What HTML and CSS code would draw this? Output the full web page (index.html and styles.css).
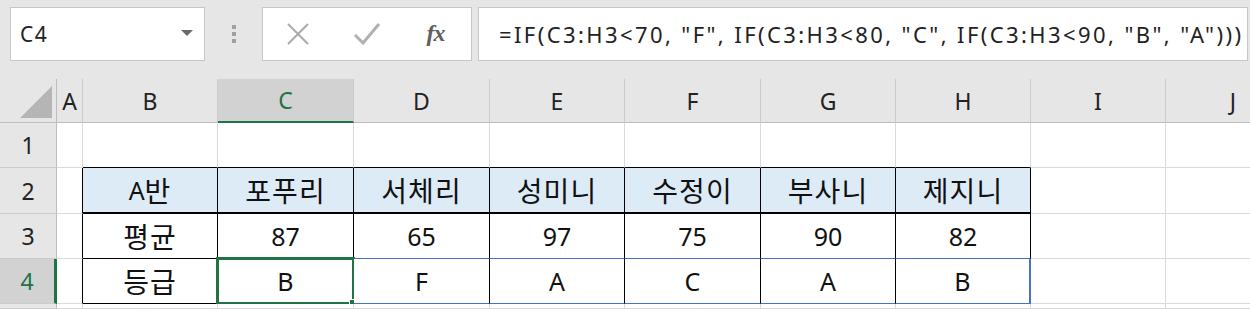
FILE: index.html
```html
<!DOCTYPE html>
<html lang="ko">
<head>
    <meta charset="UTF-8">
    <meta name="viewport" content="width=device-width, initial-scale=1.0">
    <title>Excel - IF</title>
    <link rel="stylesheet" href="styles.css">
</head>
<body>
    <div class="formula-bar">
        <div class="name-box">
            <span class="ref">C4</span>
            <span class="caret"></span>
        </div>
        <div class="grip">
            <i></i><i></i><i></i>
        </div>
        <div class="buttons">
            <span class="btn">
                <svg width="24" height="22" viewBox="0 0 24 22">
                    <path d="M2 1 L22 21 M22 1 L2 21" stroke="#ababab" stroke-width="2" fill="none"/>
                </svg>
            </span>
            <span class="btn">
                <svg width="28" height="24" viewBox="0 0 28 24">
                    <path d="M2 13 L10 21 L26 2" stroke="#b0b0b0" stroke-width="3" fill="none"/>
                </svg>
            </span>
            <span class="btn fx">fx</span>
        </div>
        <div class="formula">=IF(C3:H3&lt;70, "F", IF(C3:H3&lt;80, "C", IF(C3:H3&lt;90, "B", "A")))</div>
    </div>

    <div class="sheet">
        <!-- column headers -->
        <div class="cell corner">
            <svg width="32" height="32" viewBox="0 0 32 32"><path d="M32 0 L32 32 L0 32 Z" fill="#b5b5b5"/></svg>
        </div>
        <div class="cell hd">A</div>
        <div class="cell hd">B</div>
        <div class="cell hd on">C</div>
        <div class="cell hd">D</div>
        <div class="cell hd">E</div>
        <div class="cell hd">F</div>
        <div class="cell hd">G</div>
        <div class="cell hd">H</div>
        <div class="cell hd">I</div>
        <div class="cell hd">J</div>

        <!-- row 1 -->
        <div class="cell rh">1</div>
        <div class="cell"></div>
        <div class="cell edge-t"></div>
        <div class="cell edge-t"></div>
        <div class="cell edge-t"></div>
        <div class="cell edge-t"></div>
        <div class="cell edge-t"></div>
        <div class="cell edge-t"></div>
        <div class="cell edge-t"></div>
        <div class="cell"></div>
        <div class="cell"></div>

        <!-- row 2 -->
        <div class="cell rh">2</div>
        <div class="cell edge-l"></div>
        <div class="cell t head">A<span class="ko">반</span></div>
        <div class="cell t head"><span class="ko">포푸리</span></div>
        <div class="cell t head"><span class="ko">서체리</span></div>
        <div class="cell t head"><span class="ko">성미니</span></div>
        <div class="cell t head"><span class="ko">수정이</span></div>
        <div class="cell t head"><span class="ko">부사니</span></div>
        <div class="cell t head"><span class="ko">제지니</span></div>
        <div class="cell"></div>
        <div class="cell"></div>

        <!-- row 3 -->
        <div class="cell rh">3</div>
        <div class="cell edge-l"></div>
        <div class="cell t"><span class="ko">평균</span></div>
        <div class="cell t">87</div>
        <div class="cell t blue">65</div>
        <div class="cell t blue">97</div>
        <div class="cell t blue">75</div>
        <div class="cell t blue">90</div>
        <div class="cell t blue">82</div>
        <div class="cell"></div>
        <div class="cell"></div>

        <!-- row 4 -->
        <div class="cell rh on">4</div>
        <div class="cell edge-l"></div>
        <div class="cell t"><span class="ko">등급</span></div>
        <div class="cell t active">B<span class="sel"></span><span class="handle"></span></div>
        <div class="cell t blue">F</div>
        <div class="cell t blue">A</div>
        <div class="cell t blue">C</div>
        <div class="cell t blue">A</div>
        <div class="cell t blue blue-end">B</div>
        <div class="cell"></div>
        <div class="cell"></div>

        <!-- row 5 -->
        <div class="cell rh"></div>
        <div class="cell"></div>
        <div class="cell"></div>
        <div class="cell"></div>
        <div class="cell"></div>
        <div class="cell"></div>
        <div class="cell"></div>
        <div class="cell"></div>
        <div class="cell"></div>
        <div class="cell"></div>
        <div class="cell"></div>
    </div>
</body>
</html>
```

FILE: styles.css
```css
body {
    margin: 0;
    width: 1250px;
    height: 309px;
    overflow: hidden;
    background: #e6e6e6;
    font-family: "Noto Sans", "Noto Sans CJK KR", sans-serif;
    color: #222;
}

/* formula bar */
.formula-bar {
    height: 79px;
    box-sizing: border-box;
    padding: 7px 0 0 10px;
    display: flex;
    align-items: flex-start;
}
.name-box, .buttons, .formula {
    height: 54px;
    box-sizing: border-box;
    background: #fff;
    border: 1px solid #c6c6c6;
    display: flex;
    align-items: center;
}
.name-box {
    width: 195px;
    padding: 0 11px 0 9px;
    justify-content: space-between;
}
.ref {
    font-size: 21px;
    letter-spacing: 1.5px;
}
.caret {
    width: 0;
    height: 0;
    border-left: 6px solid transparent;
    border-right: 6px solid transparent;
    border-top: 6px solid #6a6a6a;
    margin-top: -2px;
}
.grip {
    width: 57px;
    height: 54px;
    display: flex;
    flex-direction: column;
    align-items: center;
    justify-content: center;
    gap: 3px;
}
.grip i {
    width: 4px;
    height: 4px;
    background: #a0a0a0;
}
.buttons {
    width: 210px;
}
.btn {
    width: 69px;
    display: flex;
    justify-content: center;
    align-items: center;
}
.fx {
    font-family: "Liberation Serif", serif;
    font-style: italic;
    font-weight: bold;
    font-size: 24px;
    color: #5f5f5f;
    letter-spacing: -1px;
    margin-top: -2px;
}
.formula {
    width: 770px;
    margin-left: 6px;
    padding-left: 20px;
    font-size: 22px;
    letter-spacing: 2.4px;
    white-space: nowrap;
    overflow: hidden;
}

/* sheet grid */
.sheet {
    display: grid;
    grid-template-columns: 57px 26px 135px 136px 136px 135px 136px 135px 135px 135px 135px;
    grid-template-rows: 44px 45px 46px 45px 45px 5px;
    overflow: hidden;
    width: 1250px;
    background: #fff;
}
.cell {
    position: relative;
    box-sizing: border-box;
    border-right: 1px solid #dadada;
    border-bottom: 1px solid #dadada;
    display: flex;
    align-items: center;
    justify-content: center;
    background: #fff;
    font-size: 25px;
    color: #111;
    white-space: nowrap;
}
.ko {
    font-family: "Noto Sans CJK KR", sans-serif;
    font-size: 28px;
    line-height: 1;
    letter-spacing: 1px;
}
.corner {
    background: #e6e6e6;
    border-right-color: #bdbdbd;
    border-bottom-color: #bdbdbd;
    align-items: flex-end;
    justify-content: flex-end;
    padding: 0 4px 4px 0;
}
.hd {
    background: #e6e6e6;
    border-right-color: #cbcbcb;
    border-bottom-color: #bdbdbd;
    font-size: 23px;
    color: #222;
}
.rh {
    background: #e6e6e6;
    border-right-color: #bdbdbd;
    border-bottom-color: #cbcbcb;
    font-size: 23px;
    color: #222;
}
.hd.on, .rh.on {
    background: #d2d2d2;
    color: #217346;
}
.hd.on {
    border-bottom: 2px solid #217346;
}
.rh.on {
    border-right: 3px solid #217346;
}

/* table borders */
.edge-l {
    border-right-color: #000;
}
.edge-t {
    border-bottom-color: #000;
}
.t {
    border-right-color: #000;
    border-bottom-color: #000;
}
.t.head {
    background: #ddebf7;
    border-bottom-width: 2px;
}
.t.blue {
    border-bottom-color: #4472c4;
}
.t.blue-end {
    border-right: 2px solid #4472c4;
    box-shadow: 6px 0 10px -6px rgba(0, 0, 0, 0.12);
}

/* active cell */
.sel {
    position: absolute;
    top: -2px;
    left: -2px;
    right: -2px;
    bottom: -2px;
    border: 3px solid #217346;
}
.handle {
    position: absolute;
    right: -5px;
    bottom: -5px;
    width: 7px;
    height: 7px;
    background: #217346;
    border: 1px solid #fff;
}
```
